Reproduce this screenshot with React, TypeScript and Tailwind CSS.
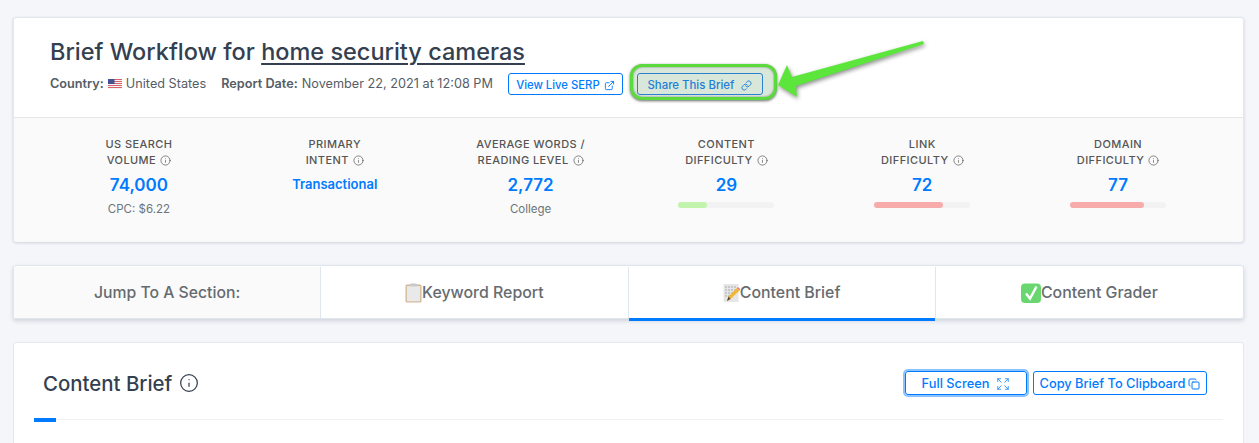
import { Copy, ExternalLink, Expand, Info, Link } from "lucide-react";

const stats = [
  { top: "US SEARCH", bottom: "VOLUME", value: "74,000", sub: "CPC: $6.22" },
  { top: "PRIMARY", bottom: "INTENT", link: "Transactional" },
  { top: "AVERAGE WORDS /", bottom: "READING LEVEL", value: "2,772", sub: "College" },
  { top: "CONTENT", bottom: "DIFFICULTY", value: "29", bar: "w-[29.5%] bg-[#c3f4ae]" },
  { top: "LINK", bottom: "DIFFICULTY", value: "72", bar: "w-[72%] bg-[#f8abab]" },
  { top: "DOMAIN", bottom: "DIFFICULTY", value: "77", bar: "w-[77%] bg-[#f8abab]" },
];

const UsFlag = () => (
  <svg width="14" height="10" viewBox="0 0 14 10" className="mr-1 inline-block align-[-1px]">
    <rect width="14" height="10" fill="#f3f3f3" />
    <path d="M0 .5h14M0 2.5h14M0 4.5h14M0 6.5h14M0 8.5h14" stroke="#d9606a" strokeWidth="1" />
    <rect width="6.5" height="5" fill="#45508f" />
  </svg>
);

const ClipboardEmoji = () => (
  <svg width="17" height="20" viewBox="0 0 17 20">
    <rect x="0.5" y="1.5" width="16" height="18" rx="1.5" fill="#d2b592" />
    <rect x="1.8" y="3" width="13.4" height="15.4" fill="#e9e9e9" />
    <rect x="5" y="0.5" width="7" height="3" rx="1" fill="#c9c9c9" />
  </svg>
);

const MemoEmoji = () => (
  <svg width="17" height="20" viewBox="0 0 17 20">
    <rect x="0.5" y="1" width="15" height="18" fill="#e6e6e6" />
    <path d="M2 4h12M2 7h12M2 10h8M2 13h6" stroke="#a9a9a9" strokeWidth="1" strokeDasharray="2 1" />
    <path d="M4 18l1.5-4.5L14 5l2.5 2.5L7.5 16z" fill="#f2b632" />
    <path d="M14 5l1-1 2 2-.5 1.5z" fill="#e8707a" />
    <path d="M4 18l1.5-4.5 2 2.5z" fill="#5b4a33" />
  </svg>
);

const CheckEmoji = () => (
  <svg width="20" height="20" viewBox="0 0 20 20">
    <rect x="0" y="0.5" width="20" height="19.5" rx="4" fill="#69d76f" />
    <path d="M5 10.5l4 5L15.5 3.5" fill="none" stroke="#fff" strokeWidth="2.4" />
  </svg>
);

const Arrow = () => (
  <svg
    width="180"
    height="80"
    viewBox="0 0 180 80"
    className="absolute left-[760px] top-[30px] overflow-visible drop-shadow-[1px_2px_2px_rgba(0,0,0,0.45)]"
  >
    <path d="M18 55 L27 35 L32 47 L163 11 L164 14 L36 56 L37 67 Z" fill="#5ce63c" />
  </svg>
);

const StatCol = ({ stat }: { stat: (typeof stats)[number] }) => (
  <div className="flex flex-col items-center">
    <div className="text-center text-[11px] font-medium leading-4 tracking-[0.42px] text-[#555]">
      <div>{stat.top}</div>
      <div className="flex items-center justify-center gap-1">
        {stat.bottom}
        <Info size={11} strokeWidth={1.5} />
      </div>
    </div>
    {stat.link ? (
      <div className="mt-[8px] text-[13px] font-semibold leading-4 text-[#007bff]">{stat.link}</div>
    ) : (
      <div className="mt-[6px] text-[17px] font-semibold leading-[22px] text-[#007bff]">{stat.value}</div>
    )}
    {stat.sub ? <div className="mt-[5px] text-[11.5px] leading-4 text-[#6c757d]">{stat.sub}</div> : null}
    {stat.bar ? (
      <div className="mt-[6px] h-[6px] w-[96px] rounded-full bg-[#f2f2f2]">
        <div className={`h-full rounded-full ${stat.bar}`} />
      </div>
    ) : null}
  </div>
);

const tabs = [
  { label: "Keyword Report", icon: <ClipboardEmoji /> },
  { label: "Content Brief", icon: <MemoEmoji />, active: true },
  { label: "Content Grader", icon: <CheckEmoji /> },
];

export default function App() {
  return (
    <div className="relative h-[443px] overflow-hidden bg-[#f4f6fa] pl-[13px] pr-[15px] pt-[17px] font-['Inter',sans-serif]">
      <div className="h-[225px] rounded-[3px] border border-[#e3e8ee] bg-white shadow-[0_1px_3px_rgba(60,72,88,0.2)]">
        <div className="h-[100px] border-b border-[#e4e6e8] pl-[36px] pt-[18px]">
          <h1 className="text-[23.5px] font-medium leading-[32px] text-[#343f50]">
            Brief Workflow for <span className="underline underline-offset-[3px]">home security cameras</span>
          </h1>
          <div className="mt-[5px] flex items-center text-[12.7px] text-[#555d66]">
            <span className="font-semibold">Country:</span>
            <span className="ml-1">
              <UsFlag />
              United States
            </span>
            <span className="ml-[15px] font-semibold">Report Date:</span>
            <span className="ml-1">November 22, 2021 at 12:08 PM</span>
            <button className="ml-[15px] flex h-[22px] w-[115px] items-center justify-center gap-1 rounded-[3px] border border-[#007bff] pt-[2px] text-[11.3px] font-medium text-[#007bff]">
              View Live SERP
              <ExternalLink size={11} />
            </button>
            <div className="relative ml-[14px]">
              <div className="absolute -bottom-[5px] -left-[7px] -right-[14px] -top-[9px] rounded-[12px] border-[3px] border-[#5ada3c] bg-[#d9e7da] shadow-[inset_0_0_2px_rgba(0,0,0,0.5),0_1px_3px_rgba(0,0,0,0.6)]" />
              <button className="relative flex h-[22px] w-[126px] items-center justify-center gap-[7px] rounded-[3px] border border-[#2b80d0] pt-[3px] text-[11.4px] font-medium text-[#1e80d8]">
                Share This Brief
                <Link size={11} />
              </button>
            </div>
          </div>
        </div>
        <div className="grid h-[124px] grid-cols-6 rounded-b-[3px] bg-[#fafafa] pl-[27px] pr-[27px] pt-[18px]">
          {stats.map((stat) => (
            <StatCol key={stat.top} stat={stat} />
          ))}
        </div>
      </div>

      <div className="mt-[23px] grid h-[54px] grid-cols-4 rounded-[3px] border border-[#e0e7ec] bg-white pt-[1px] shadow-[0_2px_4px_rgba(60,72,88,0.2)]">
        <div className="flex items-center justify-center border-r border-[#dfe7ec] bg-[#fafafa] text-[15.75px] font-medium text-[#666b70]">
          Jump To A Section:
        </div>
        {tabs.map((tab) => (
          <div
            key={tab.label}
            className="relative flex items-center justify-center border-r border-[#dfe7ec] text-[15.9px] font-medium text-[#666b70] last:border-r-0"
          >
            {tab.icon}
            {tab.label}
            {tab.active ? <div className="absolute inset-x-0 bottom-[-3px] h-[3px] bg-[#007bff]" /> : null}
          </div>
        ))}
      </div>

      <div className="mt-[23px] h-[200px] rounded-[3px] border border-[#e3e8ee] bg-white px-[20px]">
        <div className="flex h-[77px] items-center justify-between border-b border-[#eef0f2] pl-[9px] pr-[16px] pt-[4px]">
          <div className="flex items-center gap-[7px] text-[20.4px] font-medium text-[#343f50]">
            <span className="pt-[2px]">Content Brief</span>
            <Info size={20} strokeWidth={1.5} />
          </div>
          <div className="flex items-center gap-[6px] text-[12.8px] font-medium text-[#007bff]">
            <button className="flex h-[24px] w-[122px] items-center justify-center gap-[7px] rounded-[3px] border border-[#007bff] pt-[1px] shadow-[0_0_0_2px_rgba(0,123,255,0.45)]">
              Full Screen
              <Expand size={14} strokeWidth={1.25} />
            </button>
            <button className="flex h-[24px] w-[174px] items-center justify-center gap-[3px] rounded-[3px] border border-[#007bff] pt-[1px]">
              Copy Brief To Clipboard
              <Copy size={12} />
            </button>
          </div>
        </div>
        <div className="-mt-[2px] h-[4px] w-[22px] bg-[#007bff]" />
      </div>
      <Arrow />
    </div>
  );
}
